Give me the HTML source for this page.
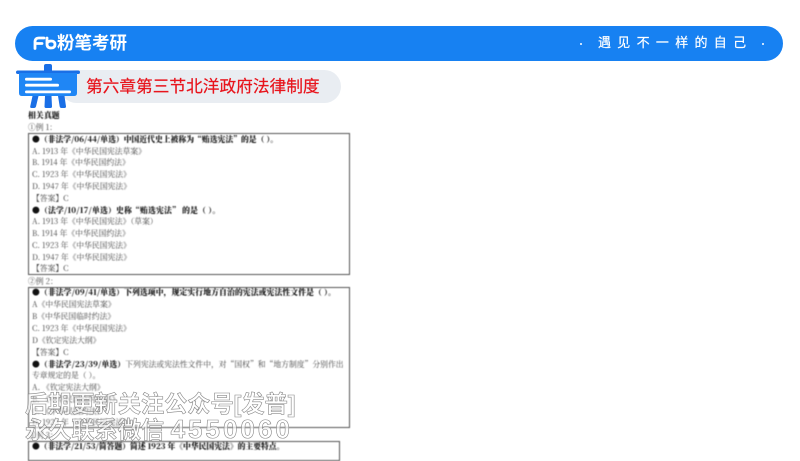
<!DOCTYPE html>
<html lang="zh"><head><meta charset="utf-8"><style>
html,body{margin:0;padding:0;background:#fff;width:800px;height:450px;overflow:hidden}
.a{position:absolute;white-space:pre;line-height:12px}
#doc{position:absolute;left:0;top:0;width:800px;height:450px;filter:blur(.4px);font-family:"Noto Serif CJK SC","Liberation Serif",serif;font-size:7.800px;color:#444}
#doc .a{left:32px}
#doc b{color:#111;font-weight:900;letter-spacing:.12px}
.box{position:absolute;border:1px solid #555;box-sizing:border-box}
.wm{position:absolute;white-space:pre;font-family:"Liberation Sans","Noto Sans CJK SC",sans-serif;font-weight:700;font-size:23.200px;line-height:26px;color:rgba(255,255,255,.65);-webkit-text-stroke:.6px #888;filter:blur(.3px)}
</style></head><body>
<div style="position:absolute;left:15px;top:26px;width:768px;height:35px;border-radius:18px;background:#1781f2"></div>
<svg style="position:absolute;left:33px;top:36px" width="24" height="14" viewBox="0 0 24 14"><path d="M2 12.500V6Q2 2 6 2H11M2 7.500H9M14 2V8Q14 12 18 12Q22 12 22 8.500Q22 5 18 5Q15.500 5 14 7" fill="none" stroke="#fff" stroke-width="2.800" stroke-linecap="round"/></svg>
<div class="a" style="left:57px;top:33px;font:700 17.500px/20px 'Liberation Sans','Noto Sans CJK SC',sans-serif;color:#fff">粉笔考研</div>
<div class="a" style="left:598px;top:34px;font:400 13px/18px 'Liberation Sans','Noto Sans CJK SC',sans-serif;color:#fff;letter-spacing:6.300px;-webkit-text-stroke:.2px #fff">遇见不一样的自己</div>
<div style="position:absolute;left:580px;top:43px;width:2px;height:2px;border-radius:1px;background:#fff"></div>
<div style="position:absolute;left:762px;top:43px;width:2px;height:2px;border-radius:1px;background:#fff"></div>
<div style="position:absolute;left:60px;top:70px;width:281px;height:33px;border-radius:17px;background:#e9edf2"></div>
<svg style="position:absolute;left:15px;top:63px" width="68" height="46" viewBox="0 0 68 46"><path d="M29 3q0-2 2-2h4q2 0 2 2v6h-8z" fill="#1a6fe6"/><rect x="1" y="7.500" width="64" height="3.500" rx="1.750" fill="#1a6fe6"/><path d="M4 10H62V30Q62 33 59 33H7Q4 33 4 30Z" fill="#1f86f5"/><path d="M17.500 33h6l-2.500 10.500q-.5 1.500-2 1.500h-2.500q-1.500 0-1.300-1.500zM30 33h6.500l.5 10.500q0 1.500-1.500 1.500h-4.500q-1.500 0-1.500-1.500zM43 33h6.500l1.500 10.500q0 1.500-1.500 1.500h-3q-1.500 0-1.800-1.500z" fill="#1a6fe6"/><rect x="10" y="14.800" width="27" height="2.800" rx="1.400" fill="#fff"/><rect x="10" y="20.800" width="34" height="2.800" rx="1.400" fill="#fff"/><rect x="10" y="27.500" width="46" height="2.800" rx="1.400" fill="#fff"/></svg>
<div class="a" style="left:86px;top:75px;font:400 16.700px/24px 'Liberation Sans','Noto Sans CJK SC',sans-serif;color:#e8141c;-webkit-text-stroke:.2px #e8141c">第六章第三节北洋政府法律制度</div>
<div id="doc">
<div class="box" style="left:28px;top:133px;width:322px;height:142px"></div>
<div class="box" style="left:28px;top:287px;width:322px;height:141px"></div>
<div class="box" style="left:28px;top:441px;width:312px;height:20px"></div>
<div class="a" style="left:28px;top:110px"><b>相关真题</b></div>
<div class="a" style="left:28px;top:122px">①例 1：</div>
<div class="a" style="top:134px"><b style="letter-spacing:.02px">●（非法学/06/44/单选）中国近代史上被称为“贿选宪法”的是（ ）。</b></div>
<div class="a" style="top:146px">A. 1913 年《中华民国宪法草案》</div>
<div class="a" style="top:157px">B. 1914 年《中华民国约法》</div>
<div class="a" style="top:169px">C. 1923 年《中华民国宪法》</div>
<div class="a" style="top:181px">D. 1947 年《中华民国宪法》</div>
<div class="a" style="top:193px">【答案】C</div>
<div class="a" style="top:205px"><b style="letter-spacing:.2px">●（法学/10/17/单选）史称“贿选宪法” 的是（ ）。</b></div>
<div class="a" style="top:216px">A. 1913 年《中华民国宪法》（草案）</div>
<div class="a" style="top:228px">B. 1914 年《中华民国约法》</div>
<div class="a" style="top:240px">C. 1923 年《中华民国宪法》</div>
<div class="a" style="top:252px">D. 1947 年《中华民国宪法》</div>
<div class="a" style="top:263px">【答案】C</div>
<div class="a" style="left:28px;top:276px">②例 2：</div>
<div class="a" style="top:287px"><b>●（非法学/09/41/单选）下列选项中，规定实行地方自治的宪法或宪法性文件是（ ）。</b></div>
<div class="a" style="top:299px">A《中华民国宪法草案》</div>
<div class="a" style="top:311px">B《中华民国临时约法》</div>
<div class="a" style="top:323px">C. 1923 年《中华民国宪法》</div>
<div class="a" style="top:335px">D《钦定宪法大纲》</div>
<div class="a" style="top:347px">【答案】C</div>
<div class="a" style="top:359px"><b>●（非法学/23/39/单选）</b>下列宪法或宪法性文件中，对“国权”和“地方制度”分别作出</div>
<div class="a" style="top:370px">专章规定的是（ ）。</div>
<div class="a" style="top:382px">A. 《钦定宪法大纲》</div>
<div class="a" style="top:394px">B. 《中华民国临时约法》</div>
<div class="a" style="top:406px">C. 《中华民国约法》</div>
<div class="a" style="top:417px">D. 1923 年《中华民国宪法》</div>
<div class="a" style="left:28px;top:430px">③例 3：</div>
<div class="a" style="top:441px"><b style="letter-spacing:0">●（非法学/21/53/简答题）简述 1923 年《中华民国宪法》的主要特点。</b></div>
</div>
<div class="wm" style="left:25px;top:391px">后期更新关注公众号[发普]</div>
<div class="wm" style="left:25px;top:416px">永久联系微信 <span style="font-size:26px;letter-spacing:3px">4550060</span></div>
</body></html>
